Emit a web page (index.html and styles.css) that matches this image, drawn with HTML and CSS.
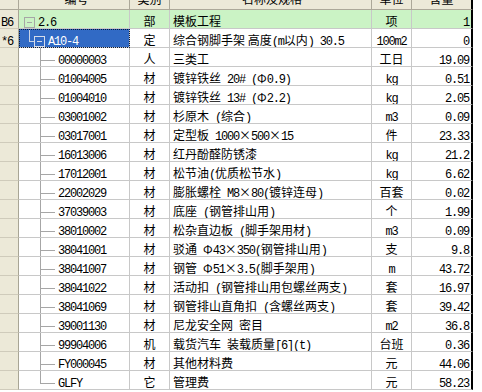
FILE: index.html
```html
<!DOCTYPE html>
<html lang="zh-CN">
<head>
<meta charset="utf-8">
<title>定额组价</title>
<link rel="stylesheet" href="styles.css">
</head>
<body>
<div class="sheet">
  <div class="row head">
    <div class="c rh"></div>
    <div class="c tree">编号</div>
    <div class="c type">类别</div>
    <div class="c name">名称及规格</div>
    <div class="c unit">单位</div>
    <div class="c qty">含量</div>
  </div>

  <div class="row green">
    <div class="c rh"><span class="a">B6</span></div>
    <div class="c tree lvl0"><span class="box"></span><span class="a">2.6</span></div>
    <div class="c type">部</div>
    <div class="c name">模板工程</div>
    <div class="c unit">项</div>
    <div class="c qty"><span class="a">1</span></div>
  </div>

  <div class="row">
    <div class="c rh"><span class="a">*6</span></div>
    <div class="c tree lvl1 sel"><span class="box"></span><span class="a">A10-4</span></div>
    <div class="c type">定</div>
    <div class="c name">综合钢脚手架 高度<span class="a">(m</span>以内<span class="a">) 30.5</span></div>
    <div class="c unit"><span class="a">100m2</span></div>
    <div class="c qty"><span class="a">0</span></div>
  </div>

  <div class="row">
    <div class="c rh"></div>
    <div class="c tree leaf"><span class="a">00000003</span></div>
    <div class="c type">人</div>
    <div class="c name">三类工</div>
    <div class="c unit">工日</div>
    <div class="c qty"><span class="a">19.09</span></div>
  </div>

  <div class="row">
    <div class="c rh"></div>
    <div class="c tree leaf"><span class="a">01004005</span></div>
    <div class="c type">材</div>
    <div class="c name">镀锌铁丝<span class="a"> 20# (</span>Φ<span class="a">0.9)</span></div>
    <div class="c unit"><span class="a">kg</span></div>
    <div class="c qty"><span class="a">0.51</span></div>
  </div>

  <div class="row">
    <div class="c rh"></div>
    <div class="c tree leaf"><span class="a">01004010</span></div>
    <div class="c type">材</div>
    <div class="c name">镀锌铁丝<span class="a"> 13# (</span>Φ<span class="a">2.2)</span></div>
    <div class="c unit"><span class="a">kg</span></div>
    <div class="c qty"><span class="a">2.05</span></div>
  </div>

  <div class="row">
    <div class="c rh"></div>
    <div class="c tree leaf"><span class="a">03001002</span></div>
    <div class="c type">材</div>
    <div class="c name">杉原木<span class="a"> (</span>综合<span class="a">)</span></div>
    <div class="c unit"><span class="a">m3</span></div>
    <div class="c qty"><span class="a">0.09</span></div>
  </div>

  <div class="row">
    <div class="c rh"></div>
    <div class="c tree leaf"><span class="a">03017001</span></div>
    <div class="c type">材</div>
    <div class="c name">定型板<span class="a"> 1000</span>×<span class="a">500</span>×<span class="a">15</span></div>
    <div class="c unit">件</div>
    <div class="c qty"><span class="a">23.33</span></div>
  </div>

  <div class="row">
    <div class="c rh"></div>
    <div class="c tree leaf"><span class="a">16013006</span></div>
    <div class="c type">材</div>
    <div class="c name">红丹酚醛防锈漆</div>
    <div class="c unit"><span class="a">kg</span></div>
    <div class="c qty"><span class="a">21.2</span></div>
  </div>

  <div class="row">
    <div class="c rh"></div>
    <div class="c tree leaf"><span class="a">17012001</span></div>
    <div class="c type">材</div>
    <div class="c name">松节油<span class="a">(</span>优质松节水<span class="a">)</span></div>
    <div class="c unit"><span class="a">kg</span></div>
    <div class="c qty"><span class="a">6.62</span></div>
  </div>

  <div class="row">
    <div class="c rh"></div>
    <div class="c tree leaf"><span class="a">22002029</span></div>
    <div class="c type">材</div>
    <div class="c name">膨胀螺栓<span class="a"> M8</span>×<span class="a">80(</span>镀锌连母<span class="a">)</span></div>
    <div class="c unit">百套</div>
    <div class="c qty"><span class="a">0.02</span></div>
  </div>

  <div class="row">
    <div class="c rh"></div>
    <div class="c tree leaf"><span class="a">37039003</span></div>
    <div class="c type">材</div>
    <div class="c name">底座<span class="a"> (</span>钢管排山用<span class="a">)</span></div>
    <div class="c unit">个</div>
    <div class="c qty"><span class="a">1.99</span></div>
  </div>

  <div class="row">
    <div class="c rh"></div>
    <div class="c tree leaf"><span class="a">38010002</span></div>
    <div class="c type">材</div>
    <div class="c name">松杂直边板<span class="a"> (</span>脚手架用材<span class="a">)</span></div>
    <div class="c unit"><span class="a">m3</span></div>
    <div class="c qty"><span class="a">0.09</span></div>
  </div>

  <div class="row">
    <div class="c rh"></div>
    <div class="c tree leaf"><span class="a">38041001</span></div>
    <div class="c type">材</div>
    <div class="c name">驳通<span class="a"> </span>Φ<span class="a">43</span>×<span class="a">350(</span>钢管排山用<span class="a">)</span></div>
    <div class="c unit">支</div>
    <div class="c qty"><span class="a">9.8</span></div>
  </div>

  <div class="row">
    <div class="c rh"></div>
    <div class="c tree leaf"><span class="a">38041007</span></div>
    <div class="c type">材</div>
    <div class="c name">钢管<span class="a"> </span>Φ<span class="a">51</span>×<span class="a">3.5(</span>脚手架用<span class="a">)</span></div>
    <div class="c unit"><span class="a">m</span></div>
    <div class="c qty"><span class="a">43.72</span></div>
  </div>

  <div class="row">
    <div class="c rh"></div>
    <div class="c tree leaf"><span class="a">38041022</span></div>
    <div class="c type">材</div>
    <div class="c name">活动扣<span class="a"> (</span>钢管排山用包螺丝两支<span class="a">)</span></div>
    <div class="c unit">套</div>
    <div class="c qty"><span class="a">16.97</span></div>
  </div>

  <div class="row">
    <div class="c rh"></div>
    <div class="c tree leaf"><span class="a">38041069</span></div>
    <div class="c type">材</div>
    <div class="c name">钢管排山直角扣<span class="a"> (</span>含螺丝两支<span class="a">)</span></div>
    <div class="c unit">套</div>
    <div class="c qty"><span class="a">39.42</span></div>
  </div>

  <div class="row">
    <div class="c rh"></div>
    <div class="c tree leaf"><span class="a">39001130</span></div>
    <div class="c type">材</div>
    <div class="c name">尼龙安全网<span class="a"> </span>密目</div>
    <div class="c unit"><span class="a">m2</span></div>
    <div class="c qty"><span class="a">36.8</span></div>
  </div>

  <div class="row">
    <div class="c rh"></div>
    <div class="c tree leaf"><span class="a">99904006</span></div>
    <div class="c type">机</div>
    <div class="c name">载货汽车<span class="a"> </span>装载质量<span class="a">[6](t)</span></div>
    <div class="c unit">台班</div>
    <div class="c qty"><span class="a">0.36</span></div>
  </div>

  <div class="row">
    <div class="c rh"></div>
    <div class="c tree leaf"><span class="a">FY000045</span></div>
    <div class="c type">材</div>
    <div class="c name">其他材料费</div>
    <div class="c unit">元</div>
    <div class="c qty"><span class="a">44.06</span></div>
  </div>

  <div class="row">
    <div class="c rh"></div>
    <div class="c tree leaf last"><span class="a">GLFY</span></div>
    <div class="c type">它</div>
    <div class="c name">管理费</div>
    <div class="c unit">元</div>
    <div class="c qty"><span class="a">58.23</span></div>
  </div>
</div>
</body>
</html>
```

FILE: styles.css
```css
html, body {
  margin: 0;
  padding: 0;
  background: #ffffff;
}

body {
  width: 482px;
  height: 392px;
  overflow: hidden;
  font-family: "Noto Sans CJK SC", "Noto Sans", sans-serif;
  font-size: 12px;
  color: #000000;
}

.sheet {
  width: 473px;
  margin-top: -9px;
}

.row {
  display: grid;
  grid-template-columns: 19px 111px 40px 202px 40px 61px;
  height: 19px;
}

.c {
  box-sizing: border-box;
  height: 19px;
  border-right: 1px solid #c8c8c8;
  border-bottom: 1px solid #c8c8c8;
  padding-top: 4px;
  line-height: 14px;
  white-space: pre;
  overflow: hidden;
}

.a {
  font-family: "Liberation Mono", monospace;
  font-size: 12px;
  letter-spacing: -1.2px;
}

.rh {
  background: #ece9d8;
  border-right: 1px solid #a8a595;
  border-bottom: 1px solid #cfcbbb;
  padding-left: 1px;
}

.head .c {
  background: #ece9d8;
  border-right: 1px solid #aca899;
  border-bottom: 1px solid #aca899;
  text-align: center;
  padding-top: 1px;
}

.head .qty {
  padding-right: 0;
  border-right: 2px solid #000000;
}

.green .c:not(.rh) {
  background-color: #cbf3c5;
}

.type,
.unit {
  text-align: center;
}

.name {
  padding-left: 3px;
}

.qty {
  text-align: right;
  padding-right: 2px;
  border-right: 2px solid #000000;
}

/* tree column */
.tree {
  padding-left: 5px;
}

.box {
  display: inline-block;
  box-sizing: border-box;
  width: 11px;
  height: 11px;
  vertical-align: top;
  margin-top: 3px;
  margin-right: 3px;
  border: 1px solid #a6a6a6;
  background: linear-gradient(#a6a6a6, #a6a6a6) 2px 4px / 5px 1px no-repeat;
}

.lvl0 {
  background:
    linear-gradient(#a6a6a6, #a6a6a6) 10px 18px / 1px 100% no-repeat;
}

.lvl1 {
  padding-left: 15px;
}

.sel {
  background-color: #316ac5;
  color: #ffffff;
  outline: 1px dotted #0a1a3a;
  outline-offset: -1px;
  background-image:
    linear-gradient(#c9d3e6, #c9d3e6),
    linear-gradient(#c9d3e6, #c9d3e6),
    linear-gradient(#c9d3e6, #c9d3e6);
  background-position: 10px 0, 10px 12px, 21px 17px;
  background-size: 1px 12px, 5px 1px, 1px 2px;
  background-repeat: no-repeat;
}

.sel .box {
  border-color: #d5dcea;
  background: linear-gradient(#d5dcea, #d5dcea) 2px 4px / 5px 1px no-repeat;
}

.leaf {
  padding-left: 39px;
  background:
    linear-gradient(#a6a6a6, #a6a6a6) 21px 0 / 1px 100% no-repeat,
    linear-gradient(#a6a6a6, #a6a6a6) 21px 12px / 15px 1px no-repeat;
}

.leaf.last {
  background:
    linear-gradient(#a6a6a6, #a6a6a6) 21px 0 / 1px 13px no-repeat,
    linear-gradient(#a6a6a6, #a6a6a6) 21px 12px / 15px 1px no-repeat;
}
```
